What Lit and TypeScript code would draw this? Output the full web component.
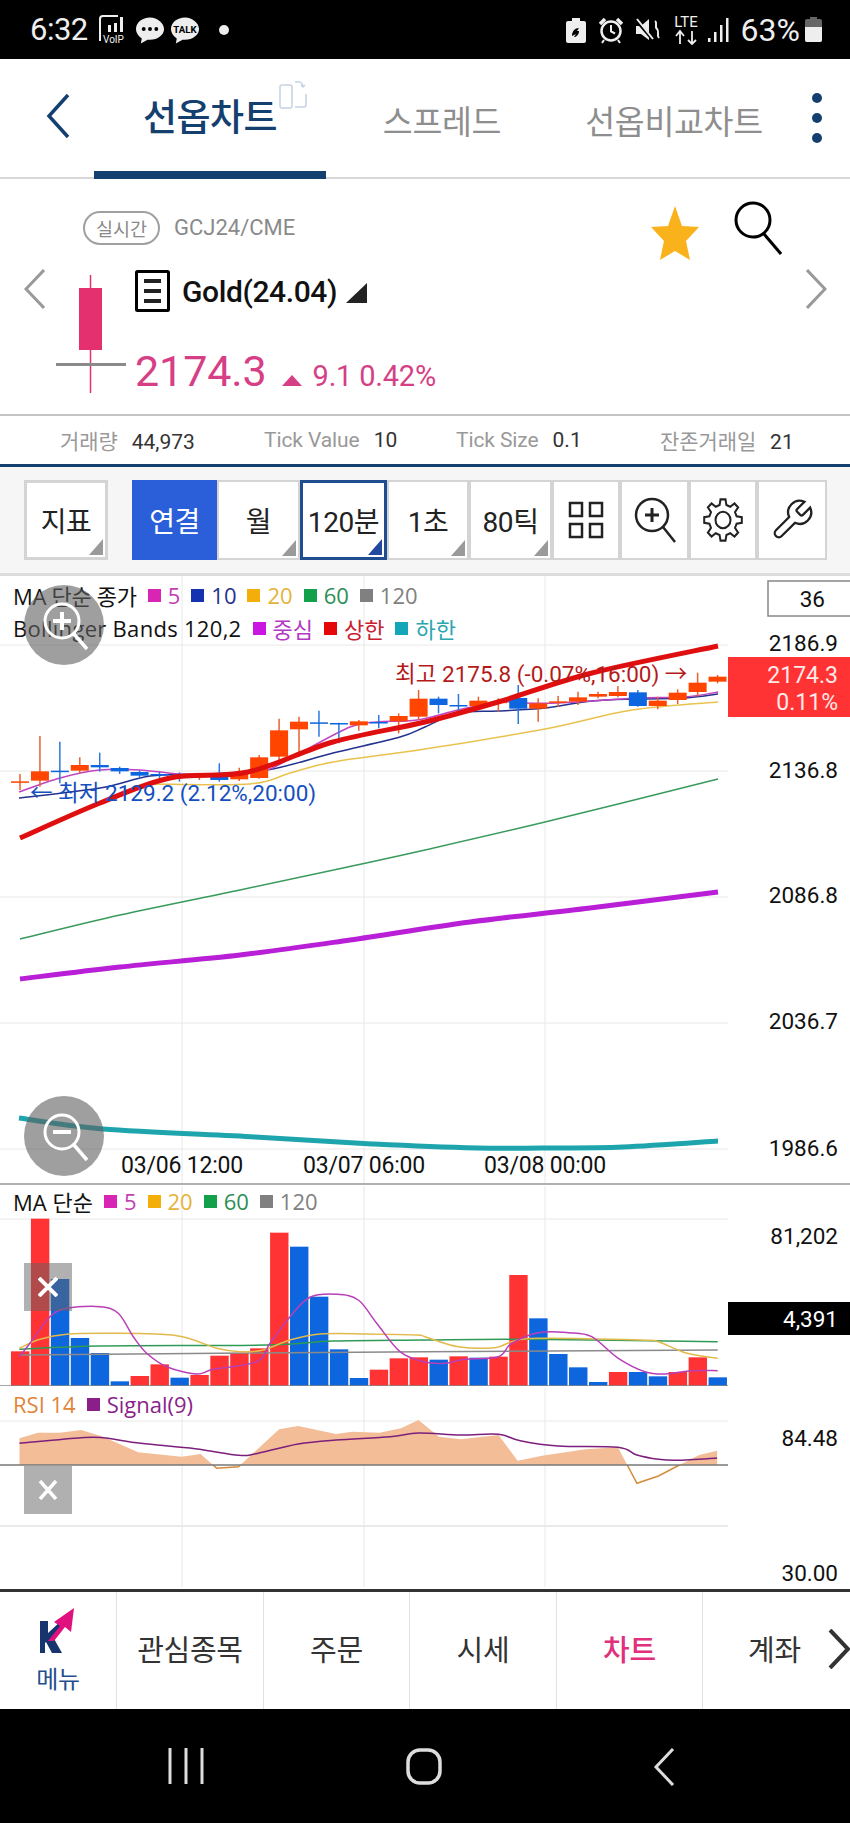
import { LitElement, html, css, svg } from "lit";
import { customElement } from "lit/decorators.js";

type P = [number, number];
const path = (pts: P[]) => pts.map((p, i) => (i ? "L" : "M") + p[0] + " " + p[1]).join(" ");
// smooth curve through points
const smooth = (pts: P[]) => {
  let d = `M${pts[0][0]} ${pts[0][1]}`;
  for (let i = 0; i < pts.length - 1; i++) {
    const p0 = pts[i - 1] || pts[i], p1 = pts[i], p2 = pts[i + 1], p3 = pts[i + 2] || p2;
    const c1: P = [p1[0] + (p2[0] - p0[0]) / 6, p1[1] + (p2[1] - p0[1]) / 6];
    const c2: P = [p2[0] - (p3[0] - p1[0]) / 6, p2[1] - (p3[1] - p1[1]) / 6];
    d += ` C${c1[0].toFixed(1)} ${c1[1].toFixed(1)} ${c2[0].toFixed(1)} ${c2[1].toFixed(1)} ${p2[0]} ${p2[1]}`;
  }
  return d;
};
const cx = (i: number) => 20 + 19.93 * i;
const yA = (v: number) => 570 + v / 3;
const yB = (v: number) => 1180 + v / 3;
const z3 = (list: P[]): P[] => list.map(([x, y]) => [+(x / 3).toFixed(1), +yB(y).toFixed(1)]);
const z6 = (list: P[]): P[] => list.map(([x, y]) => [+(425 + x / 3).toFixed(1), +yB(y).toFixed(1)]);
const z7 = (list: P[]): P[] => list.map(([x, y]) => [+(x / 1.845).toFixed(1), +(1390 + y / 3).toFixed(1)]);

// up?, wickTop, wickBottom, bodyTop, bodyBottom (zoom units)
const candles: [number, number, number, number, number][] = [
  [1,612,660,634,637],[1,498,650,604,632],[0,515,640,602,604],[1,562,610,585,602],[0,548,605,585,592],
  [0,590,612,594,604],[0,602,622,606,617],[0,605,625,612,614],[0,607,635,617,620],[1,610,630,612,622],
  [0,580,635,612,630],[1,593,633,612,628],[1,555,626,562,624],[1,446,575,481,560],[1,440,560,455,478],
  [0,422,500,457,459],[0,458,520,459,461],[1,450,482,454,466],[0,435,475,456,458],[1,430,490,438,454],
  [1,360,450,386,440],[0,380,430,386,405],[0,372,425,405,407],[1,380,420,392,408],[1,385,425,395,397],
  [0,345,462,384,416],[1,385,455,400,416],[1,378,410,394,396],[1,365,405,382,395],[1,365,385,372,380],
  [1,348,382,366,378],[0,360,410,367,408],[1,380,418,392,408],[1,358,402,368,390],[1,308,380,338,366],
  [1,315,340,320,335],
];
const bars: [number, number][] = [
  [1,514],[1,116],[0,297],[0,474],[0,519],[0,604],[1,588],[1,553],[0,593],[1,585],[1,527],[1,519],
  [1,505],[1,158],[0,200],[0,350],[0,508],[0,594],[1,569],[1,535],[1,532],[0,539],[1,529],[0,533],
  [1,530],[1,285],[0,415],[0,522],[0,562],[0,606],[1,576],[0,576],[0,589],[1,576],[1,532],[0,592],
];

const upper: P[] = [[20,838],[100,803],[170,778],[248,772],[333,742],[425,722],[498,702],[592,673],[718,646]];
const middle: P[] = [[20,979],[120,967],[240,955],[350,940],[470,922],[590,908],[718,892]];
const lower: P[] = [[19,1118],[103,1129],[255,1137],[374,1144],[477,1148],[542,1148],[623,1147],[718,1141]];
const green: P[] = [[20,939],[120,915],[240,890],[343,868],[425,850],[545,822],[718,779]];
const yellow: P[] = [[150,784],[250,784],[290,773],[333,762],[425,749],[545,729],[632,710],[718,702]];
const blue: P[] = [[19,798],[100,788],[150,776],[200,774],[267,770],[333,753],[400,737],[425,727],[458,713],[498,711],[545,708],[592,701],[638,699],[685,698],[718,694]];
const magenta: P[] = [[19,792],[60,778],[100,770],[140,770],[180,774],[233,774],[267,770],[300,753],[350,727],[377,722],[417,720],[458,710],[498,702],[525,703],[558,703],[592,701],[638,698],[685,697],[718,692]];

const vMag: P[] = [...z3([[58,530],[90,490],[150,410],[200,385],[300,380],[355,400],[400,470],[440,520],[500,560],[590,582],[640,568],[770,545],[810,490],[870,410],[930,352],[1010,343],[1075,360],[1130,430],[1200,515],[1270,545]]),
  ...z6([[60,550],[120,538],[220,530],[260,490],[340,458],[430,458],[500,470],[580,535],[660,575],[720,582],[800,572],[878,572]])];
const vYel: P[] = [...z3([[58,505],[120,478],[200,463],[330,460],[530,467],[650,505],[720,515],[790,510],[870,480],[960,462],[1100,462],[1250,465]]),
  ...z6([[0,470],[100,500],[210,503],[260,485],[340,475],[640,480],[700,485],[780,518],[878,535]])];
const vGre: P[] = [...z3([[58,508],[300,498],[800,495],[1000,483],[1270,480]]), ...z6([[300,478],[878,485]])];
const vGry: P[] = [...z3([[58,525],[1270,515]]), ...z6([[878,510]])];

const rsi: P[] = z7([[36,145],[70,128],[110,128],[150,120],[190,140],[255,187],[335,200],[370,192],[400,235],[440,230],[515,118],[550,108],[620,132],[650,125],[700,128],[740,115],[772,90],[810,140],[850,148],[920,135],[955,212],[1000,197],[1080,178],[1140,172],[1175,280],[1215,258],[1250,228],[1290,195],[1323,182]]);
const signal: P[] = z7([[36,160],[150,143],[190,143],[260,160],[360,176],[440,196],[470,192],[550,162],[620,150],[720,140],[772,129],[850,135],[920,133],[960,152],[1030,168],[1140,172],[1175,195],[1215,208],[1250,211],[1323,204]]);

const gearPath = (() => {
  const c = 20, n = 8, ro = 19, ri = 14;
  const pts: string[] = [];
  for (let i = 0; i < n; i++) {
    const a = (i / n) * Math.PI * 2 - Math.PI / 2;
    const s = Math.PI / n;
    [[ri, -s * 0.62], [ro, -s * 0.34], [ro, s * 0.34], [ri, s * 0.62]].forEach(([r, o]) => {
      pts.push(`${(c + r * Math.cos(a + o)).toFixed(1)} ${(c + r * Math.sin(a + o)).toFixed(1)}`);
    });
  }
  return "M" + pts.join(" L") + " Z";
})();

const legend1 = [["#d925b4", "5", "#c23fb5"], ["#1433b0", "10", "#23318f"], ["#f4ae0a", "20", "#e6b33a"], ["#12a04a", "60", "#2a8f55"], ["#808080", "120", "#808080"]];
const legend2 = [["#c916e0", "중심", "#b338c4"], ["#e40808", "상한", "#c82030"], ["#13a6b8", "하한", "#2aa6b0"]];
const legend3 = [["#d925b4", "5", "#c23fb5"], ["#f4ae0a", "20", "#e6b33a"], ["#12a04a", "60", "#2a8f55"], ["#808080", "120", "#808080"]];
const legendItems = (items: string[][]) => items.map(([sq, t, c]) => html`<span class="sq" style="background:${sq}"></span><span class="lt" style="color:${c}">${t}</span>`);

@customElement("app-root")
export class AppRoot extends LitElement {
  static styles = css`
    :host { display: block; width: 850px; height: 1823px; overflow: hidden; background: #fff;
      font-family: Roboto, "Noto Sans CJK KR", sans-serif; color: #111; }
    * { box-sizing: border-box; }
    svg { display: block; }
    .page { display: flex; flex-direction: column; height: 1823px; }

    .status { height: 59px; background: #000; color: #eee; display: flex; align-items: center; padding: 0 28px 0 30px; flex: none; }
    .time { font-size: 31px; width: 68px; letter-spacing: -.5px; }
    .sl { display: flex; align-items: center; gap: 5px; }
    .sr { margin-left: auto; display: flex; align-items: center; }
    .pct { font-size: 32px; margin: 0 5px 0 11px; letter-spacing: 0; }

    .tabs { height: 120px; flex: none; display: grid; grid-template-columns: 94px 232px 232px 232px 60px; border-bottom: 2px solid #d8d8d8; }
    .back { display: flex; align-items: center; padding: 0 0 4px 46px; }
    .tab { position: relative; display: flex; align-items: center; justify-content: center; font-size: 32.5px; color: #8e8e8e; margin-bottom: -2px; white-space: nowrap; letter-spacing: -.3px; }
    .tab.on { color: #14406f; font-weight: 500; font-size: 37px; border-bottom: 8px solid #14406f; letter-spacing: -.5px; }
    .rot { position: absolute; left: 185px; top: 21px; }
    .dots { display: flex; flex-direction: column; align-items: center; justify-content: center; gap: 10px; padding-right: 6px; }
    .dots i { width: 10px; height: 10px; border-radius: 50%; background: #14406f; }

    .info { height: 237px; flex: none; border-bottom: 2px solid #c4c4c4; display: flex; flex-direction: column; }
    .r1 { height: 76px; flex: none; display: flex; padding: 22px 68px 0 83px; align-items: flex-start; }
    .pill { height: 34px; width: 77px; margin-top: 10px; border: 2px solid #a0a0a0; border-radius: 17px; font-size: 18.5px; color: #8a8a8a; display: flex; align-items: center; justify-content: center; }
    .code { margin: 14px 0 0 14px; font-size: 22px; color: #8a8a8a; }
    .star { margin: 5px 35px 0 auto; }
    .r2 { flex: 1; display: flex; padding: 0 23px 0 24px; }
    .chev { margin-top: 14px; flex: none; }
    .candle { margin: 18px 0 0 11px; flex: none; }
    .col { margin-left: 9px; flex: 1; }
    .name { display: flex; align-items: center; margin-top: 15px; height: 42px; }
    .gold { font-size: 30px; font-weight: 500; margin-left: 12px; letter-spacing: -.4px; }
    .tri { margin-left: 9px; margin-top: 4px; }
    .price { display: flex; align-items: baseline; color: #d63f86; margin-top: 33px; }
    .p1 { font-size: 43px; line-height: 52px; letter-spacing: -.1px; }
    .up { width: 0; height: 0; border-left: 10px solid transparent; border-right: 10px solid transparent; border-bottom: 11px solid #d63f86; margin: 0 11px 0 15px; }
    .p2 { font-size: 29px; letter-spacing: -.2px; }

    .stats { height: 51px; flex: none; border-bottom: 3px solid #14406f; display: grid; grid-template-columns: 204px 192px 204px 1fr; padding-left: 60px; align-items: center; font-size: 21px; }
    .stat { display: flex; gap: 14px; white-space: nowrap; align-items: baseline; }
    .stat b { font-weight: 400; color: #999; letter-spacing: -.1px; }
    .stat span { color: #333; }

    .bar { height: 109px; flex: none; background: #f6f6f6; border-bottom: 3px solid #dcdcdc; padding: 13px 0 0 24px; display: grid; grid-template-columns: 108px 85px 83px 87px 82px 83px 68px 69px 68px 70px; align-items: start; }
    .btn { position: relative; height: 80px; background: #fff; border: 2px solid #d4d4d4; display: flex; align-items: center; justify-content: center; font-size: 28px; color: #222; white-space: nowrap; letter-spacing: -.4px; }
    .btn.first { width: 84px; border-width: 3px; }
    .btn.blue { background: #2b5fd9; border-color: #2b5fd9; color: #fff; }
    .btn.sel { border: 3px solid #1f4d8f; z-index: 1; }
    .btn.corner::after { content: ""; position: absolute; right: 2px; bottom: 2px; border-style: solid; border-width: 0 0 16px 14px; border-color: transparent transparent #9a9a9a transparent; }
    .btn.sel.corner::after { border-bottom-color: #2249a0; }

    .pane { position: relative; flex: none; overflow: hidden; }
    .pane svg.g { position: absolute; left: 0; top: 0; }
    .p-main { height: 607px; }
    .p-vol { height: 203px; border-top: 2px solid #b0b0b0; }
    .p-rsi { height: 203px; }
    .lg { position: absolute; left: 13px; display: flex; align-items: center; font-family: "Open Sans", "Noto Sans CJK KR", sans-serif; font-size: 22px; white-space: nowrap; color: #111; height: 30px; }
    .sq { width: 13px; height: 13px; margin: 0 7px 0 11px; flex: none; }
    .l1 { top: 4px; } .l2 { top: 37px; }
    .l1 > span:first-child { letter-spacing: -.3px; }
    .l2 > span:first-child { letter-spacing: .3px; }
    .lv { top: 1px; } .lr { top: 3px; }
    .rsi-n { color: #e0853a; } .rsi-s { color: #8a1f8a; }
    .rsq { width: 13px; height: 13px; background: #8a1f8a; margin: 0 7px 0 11px; }
    .zoomc { position: absolute; left: 24px; width: 80px; height: 80px; border-radius: 50%; background: rgba(95,95,95,.6); }
    .zoomc.a { top: 9px; } .zoomc.b { top: 520px; }
    .xb { position: absolute; left: 24px; width: 48px; height: 48px; background: rgba(100,100,100,.5); display: flex; align-items: center; justify-content: center; }
    .xb.a { top: 78px; } .xb.b { top: 80px; background: #b0b0b0; }

    text { font-family: Roboto, "Noto Sans CJK KR", sans-serif; }
    .ax { font-size: 22.5px; fill: #111; text-anchor: end; }
    .axw { font-size: 23px; fill: #ffe9e9; text-anchor: end; }
    .axk { font-size: 22.5px; fill: #fff; text-anchor: end; }
    .tm { font-size: 23px; fill: #111; text-anchor: middle; letter-spacing: -.2px; }
    .hi { font-size: 22.5px; fill: #b51a1a; }
    .lo { font-size: 22.5px; fill: #1450c0; }

    .nav { height: 120px; flex: none; border-top: 3px solid #333; display: grid; grid-template-columns: 117px 147px 146px 147px 146px 147px; position: relative; background: #fff; }
    .ni { border-right: 1px solid #e2e2e2; display: flex; align-items: center; justify-content: center; font-size: 29px; color: #333; padding-bottom: 6px; letter-spacing: -.3px; }
    .ni:nth-child(6) { border-right: 0; padding-right: 4px; }
    .ni.on { color: #e0307e; font-weight: 500; }
    .menu { flex-direction: column; padding: 0; justify-content: flex-start; }
    .menu span { font-size: 24px; color: #1f4f8f; margin-top: 11px; line-height: 30px; }
    .menu svg { margin: 12px 12px 0 0; }
    .more { position: absolute; right: 0; top: 37px; }

    .sys { flex: 1; background: #000; display: flex; align-items: flex-start; padding-top: 39px; }
    .sys div { display: flex; justify-content: center; }
    .s1 { margin-left: 168px; width: 36px; } .s2 { margin-left: 202px; width: 36px; } .s3 { margin-left: 211px; width: 22px; }
  `;

  private mainChart() {
    return svg`
      <g stroke="#e8e8e8" stroke-width="1" fill="none">
        ${[645, 771, 897, 1023, 1149].map((y) => svg`<line x1="0" x2="728" y1=${y} y2=${y}/>`)}
        ${[182, 364, 545].map((x) => svg`<line x1=${x} x2=${x} y1="576" y2="1184"/>`)}
      </g>
      <path d=${smooth(lower)} stroke="#1ea4ad" stroke-width="5" fill="none"/>
      <path d=${smooth(middle)} stroke="#b81fd6" stroke-width="5" fill="none"/>
      <path d=${smooth(green)} stroke="#3a9a5c" stroke-width="1.5" fill="none"/>
      <path d=${smooth(yellow)} stroke="#e9c24e" stroke-width="1.5" fill="none"/>
      <path d=${smooth(blue)} stroke="#23318f" stroke-width="1.5" fill="none"/>
      <path d=${smooth(magenta)} stroke="#c044c0" stroke-width="1.5" fill="none"/>
      ${candles.map(([up, a, b, c, d], i) => {
        const col = up ? "#ff4500" : "#0b66e0";
        const x = cx(i);
        return svg`<line x1=${x} x2=${x} y1=${yA(a)} y2=${yA(b)} stroke=${up ? "#e8622e" : "#2a78dc"} stroke-width="1.5"/>
          <rect x=${x - 9} y=${yA(c)} width="18" height=${Math.max((d - c) / 3, 1.5)} fill=${col}/>`;
      })}
      <path d=${smooth(upper)} stroke="#e00f0f" stroke-width="5" fill="none"/>
      <text class="lo" x="30" y="801">← 최저 2129.2 (2.12%,20:00)</text>
      <text class="hi" x="395" y="682">최고 2175.8 (-0.07%,16:00) →</text>
      <rect x="768" y="581" width="83" height="35" fill="#fff" stroke="#888" stroke-width="1.5"/>
      <text class="ax" x="825" y="607">36</text>
      <text class="ax" x="838" y="651">2186.9</text>
      <rect x="728" y="657" width="122" height="60" fill="#ff3333"/>
      <text class="axw" x="838" y="683">2174.3</text>
      <text class="axw" x="838" y="710">0.11%</text>
      <text class="ax" x="838" y="778">2136.8</text>
      <text class="ax" x="838" y="903">2086.8</text>
      <text class="ax" x="838" y="1029">2036.7</text>
      <text class="ax" x="838" y="1156">1986.6</text>
      ${[["03/06 12:00", 182], ["03/07 06:00", 364], ["03/08 00:00", 545]].map(([t, x]) => svg`<text class="tm" x=${x} y="1173">${t}</text>`)}
    `;
  }

  private volChart() {
    return svg`
      <g stroke="#e8e8e8" stroke-width="1" fill="none">
        <line x1="0" x2="728" y1="1219" y2="1219"/>
        ${[182, 364, 545].map((x) => svg`<line x1=${x} x2=${x} y1="1186" y2="1388"/>`)}
      </g>
      ${bars.map(([up, t], i) => svg`<rect x=${cx(i) - 9} y=${yB(t)} width="18.4" height=${(619 - t) / 3} fill=${up ? "#ff3333" : "#0d66dd"}/>`)}
      <line x1="0" x2="728" y1="1386" y2="1386" stroke="#888" stroke-width="1.5"/>
      <path d=${smooth(vGry)} stroke="#8a8a8a" stroke-width="1.5" fill="none"/>
      <path d=${smooth(vGre)} stroke="#2f9a55" stroke-width="1.5" fill="none"/>
      <path d=${smooth(vYel)} stroke="#e2b94b" stroke-width="1.5" fill="none"/>
      <path d=${smooth(vMag)} stroke="#b83fb8" stroke-width="1.5" fill="none"/>
      <text class="ax" x="838" y="1244">81,202</text>
      <rect x="728" y="1302" width="122" height="33" fill="#000"/>
      <text class="axk" x="838" y="1327">4,391</text>
    `;
  }

  private rsiChart() {
    const first = rsi[0], last = rsi[rsi.length - 1];
    return svg`
      <defs>
        <clipPath id="above"><rect x="0" y="1386" width="850" height="79"/></clipPath>
        <clipPath id="below"><rect x="0" y="1465" width="850" height="60"/></clipPath>
      </defs>
      <g stroke="#e8e8e8" stroke-width="1" fill="none">
        <line x1="0" x2="728" y1="1421" y2="1421"/>
        <line x1="0" x2="728" y1="1526" y2="1526" stroke="#d4d4d4"/>
        ${[182, 364, 545].map((x) => svg`<line x1=${x} x2=${x} y1="1388" y2="1587"/>`)}
      </g>
      <path d=${path(rsi) + ` L${last[0]} 1465 L${first[0]} 1465 Z`} fill="#f3bd98" clip-path="url(#above)"/>
      <path d=${path(rsi)} fill="none" stroke="#d68a3c" stroke-width="1.5" clip-path="url(#below)"/>
      <line x1="0" x2="728" y1="1465" y2="1465" stroke="#777" stroke-width="1.5"/>
      <path d=${smooth(signal)} stroke="#7c1f7c" stroke-width="1.5" fill="none"/>
      <text class="ax" x="838" y="1446">84.48</text>
      <text class="ax" x="838" y="1581">30.00</text>
    `;
  }

  render() {
    return html`<div class="page">
      <div class="status">
        <span class="time">6:32</span>
        <div class="sl">
          <svg width="32" height="34" viewBox="0 0 32 34" fill="none"><path d="M2 28V6a3 3 0 0 1 3-3h15" stroke="#eee" stroke-width="2"/><path d="M10 19h3v-7h-3zM16 19h3V10h-3zM22 19h3V4h-3z" fill="#eee"/><text x="5" y="30" font-size="10" fill="#eee">VoIP</text></svg>
          <svg width="30" height="32" viewBox="0 0 31 32"><path d="M15.5 3C7.5 3 1 8.2 1 15c0 4 2.4 7.5 6 9.700L6 30l7-4c.8.100 1.700.200 2.500.200 8 0 14.500-5.200 14.500-11.200S23.500 3 15.500 3z" fill="#eee"/><circle cx="9" cy="15" r="2" fill="#000"/><circle cx="15.500" cy="15" r="2" fill="#000"/><circle cx="22" cy="15" r="2" fill="#000"/></svg>
          <svg width="30" height="32" viewBox="0 0 31 32"><path d="M15.500 3C7.500 3 1 8.200 1 15c0 4 2.400 7.500 6 9.700L6 30l7-4c.8.100 1.700.200 2.500.200 8 0 14.500-5.200 14.500-11.200S23.500 3 15.500 3z" fill="#eee"/><text x="15.500" y="19" font-size="10" font-weight="700" text-anchor="middle" fill="#000">TALK</text></svg>
          <svg width="10" height="10" viewBox="0 0 10 10" style="margin-left:14px"><circle cx="5" cy="5" r="5" fill="#eee"/></svg>
        </div>
        <div class="sr">
          <svg width="20" height="26" viewBox="0 0 20 26" style="margin-right:13px"><path d="M6 1h8v3h4a2 2 0 0 1 2 2v18a2 2 0 0 1-2 2H2a2 2 0 0 1-2-2V6a2 2 0 0 1 2-2h4z" fill="#eee"/><path d="M6 19c0-5 3-8 7-8l-2 3h2c0 4-3 6-5 6l2-3z" fill="#000"/></svg>
          <svg width="24" height="28" viewBox="0 0 24 28" style="margin-right:12px" fill="none" stroke="#eee"><circle cx="12" cy="15" r="9.500" stroke-width="2.500"/><path d="M12 9v6.500l4 2" stroke-width="2"/><path d="M1 8l5-5M23 8l-5-5" stroke-width="3.500"/><path d="M5 24l-2 3M19 24l2 3" stroke-width="2"/></svg>
          <svg width="26" height="26" viewBox="0 0 26 26" style="margin-right:11px" fill="none"><path d="M1 9h5l8 -7v21l-8-6H1z" fill="#eee"/><path d="M1 3l17 20" stroke="#000" stroke-width="3"/><path d="M2 2l16 20" stroke="#eee" stroke-width="2"/><path d="M20 4c3 2-1 5 2 8s-1 5 2 9" stroke="#eee" stroke-width="2"/></svg>
          <svg width="28" height="32" viewBox="0 0 28 32" style="margin-right:8px"><text x="14" y="13" font-size="15" text-anchor="middle" fill="#eee">LTE</text><path d="M8 30V18M4 22l4-5 4 5M20 17v13M16 26l4 4 4-4" stroke="#eee" stroke-width="1.800" fill="none"/></svg>
          <svg width="22" height="24" viewBox="0 0 22 24" fill="#eee"><rect x="0" y="20" width="2.500" height="4"/><rect x="6" y="14" width="2.500" height="10"/><rect x="12" y="7" width="2.500" height="17"/><rect x="18" y="0" width="2.500" height="24"/></svg>
          <span class="pct">63%</span>
          <svg width="17" height="25" viewBox="0 0 17 25"><path d="M5 0h7v2h3a2 2 0 0 1 2 2v19a2 2 0 0 1-2 2H2a2 2 0 0 1-2-2V4a2 2 0 0 1 2-2h3z" fill="#666"/><path d="M0 10h17v13a2 2 0 0 1-2 2H2a2 2 0 0 1-2-2z" fill="#eee"/></svg>
        </div>
      </div>

      <div class="tabs">
        <div class="back"><svg width="24" height="46" viewBox="0 0 24 46" fill="none"><path d="M22 2L3 23l19 21" stroke="#14406f" stroke-width="3.500"/></svg></div>
        <div class="tab on">선옵차트
          <svg class="rot" width="30" height="30" viewBox="0 0 30 30" fill="none" stroke="#c5d2e4" stroke-width="1.500"><rect x="1" y="5" width="12" height="23" rx="2"/><path d="M16 2c4-1 7 0 8 4M26 5l-2 2-2-2M27 14v11a2 2 0 0 1-2 2h-9"/></svg>
        </div>
        <div class="tab">스프레드</div>
        <div class="tab">선옵비교차트</div>
        <div class="dots"><i></i><i></i><i></i></div>
      </div>

      <div class="info">
        <div class="r1">
          <span class="pill">실시간</span><span class="code">GCJ24/CME</span>
          <svg class="star" width="48" height="54" viewBox="0 0 48 54"><path d="M24 0l7 20 17 1-13 14 4 19-15-9-15 9 4-19L0 21l17-1z" fill="#f9b21c"/></svg>
          <svg width="48" height="54" viewBox="0 0 48 54" fill="none" stroke="#000"><ellipse cx="19" cy="19" rx="17" ry="17" stroke-width="3"/><path d="M30 33l17 20" stroke-width="3"/></svg>
        </div>
        <div class="r2">
          <svg class="chev" width="21" height="40" viewBox="0 0 21 40" fill="none"><path d="M20 1L2 20l18 19" stroke="#999" stroke-width="3"/></svg>
          <svg class="candle" width="70" height="122" viewBox="0 0 70 122"><path d="M34.500 2v118" stroke="#e4306f" stroke-width="1.500"/><rect x="23" y="15" width="23" height="62" fill="#e4306f"/><rect x="0" y="90" width="70" height="3" fill="#8a8a8a"/></svg>
          <div class="col">
            <div class="name">
              <svg width="35" height="42" viewBox="0 0 35 42" fill="none"><rect x="1.500" y="1.500" width="32" height="39" stroke="#000" stroke-width="3" rx="1"/><path d="M9 11h17M9 21h17M9 31h17" stroke="#222" stroke-width="4"/></svg>
              <span class="gold">Gold(24.04)</span>
              <svg class="tri" width="21" height="20" viewBox="0 0 21 20"><path d="M21 0v20H0z" fill="#222"/></svg>
            </div>
            <div class="price"><span class="p1">2174.3</span><span class="up"></span><span class="p2">9.1 0.42%</span></div>
          </div>
          <svg class="chev" width="21" height="40" viewBox="0 0 21 40" fill="none"><path d="M1 1l18 19L1 39" stroke="#999" stroke-width="3"/></svg>
        </div>
      </div>

      <div class="stats">
        <div class="stat"><b>거래량</b><span>44,973</span></div>
        <div class="stat"><b>Tick Value</b><span>10</span></div>
        <div class="stat"><b>Tick Size</b><span>0.1</span></div>
        <div class="stat"><b>잔존거래일</b><span>21</span></div>
      </div>

      <div class="bar">
        <div class="btn first corner">지표</div>
        <div class="btn blue">연결</div>
        <div class="btn corner">월</div>
        <div class="btn sel corner">120분</div>
        <div class="btn corner">1초</div>
        <div class="btn corner">80틱</div>
        <div class="btn"><svg width="36" height="38" viewBox="0 0 36 38" fill="none" stroke="#222" stroke-width="2.500"><rect x="2" y="2" width="12" height="13"/><rect x="22" y="2" width="12" height="13"/><rect x="2" y="23" width="12" height="13"/><rect x="22" y="23" width="12" height="13"/></svg></div>
        <div class="btn"><svg width="42" height="46" viewBox="0 0 42 46" fill="none" stroke="#222" stroke-width="2.500"><circle cx="18" cy="18" r="16"/><path d="M18 11v14M11 18h14" stroke-width="3"/><path d="M29 30l12 15"/></svg></div>
        <div class="btn"><svg width="40" height="44" viewBox="0 0 40 40" preserveAspectRatio="none" fill="none" stroke="#222" stroke-width="2"><path d=${gearPath}/><circle cx="20" cy="20" r="7.500"/></svg></div>
        <div class="btn"><svg width="46" height="48" viewBox="0 0 24 24" fill="none" stroke="#222" stroke-width="1.200"><path d="M14.700 6.300a1 1 0 0 0 0 1.400l1.600 1.600a1 1 0 0 0 1.400 0l3.770-3.770a6 6 0 0 1-7.940 7.940l-6.910 6.910a2.120 2.120 0 0 1-3-3l6.910-6.910a6 6 0 0 1 7.940-7.940l-3.760 3.760z"/></svg></div>
      </div>

      <div class="pane p-main">
        <svg class="g" width="850" height="607" viewBox="0 576 850 607">${this.mainChart()}</svg>
        <div class="lg l1"><span>MA 단순 종가</span>${legendItems(legend1)}</div>
        <div class="lg l2"><span>Bollinger Bands 120,2</span>${legendItems(legend2)}</div>
        <div class="zoomc a"><svg width="80" height="80" viewBox="0 0 80 80" fill="none" stroke="#fff" stroke-width="3"><circle cx="38" cy="36" r="17"/><path d="M38 27v18M29 36h18" stroke-width="4"/><path d="M50 49l13 15" stroke-width="3.500"/></svg></div>
        <div class="zoomc b"><svg width="80" height="80" viewBox="0 0 80 80" fill="none" stroke="#fff" stroke-width="3"><circle cx="38" cy="36" r="17"/><path d="M29 36h18" stroke-width="4"/><path d="M50 49l13 15" stroke-width="3.500"/></svg></div>
      </div>

      <div class="pane p-vol">
        <svg class="g" width="850" height="201" viewBox="0 1185 850 201">${this.volChart()}</svg>
        <div class="lg lv"><span>MA 단순</span>${legendItems(legend3)}</div>
        <div class="xb a"><svg width="20" height="20" viewBox="0 0 20 20" stroke="#fff" stroke-width="4"><path d="M1 1l18 18M19 1L1 19"/></svg></div>
      </div>

      <div class="pane p-rsi">
        <svg class="g" width="850" height="203" viewBox="0 1386 850 203">${this.rsiChart()}</svg>
        <div class="lg lr"><span class="rsi-n">RSI 14</span><span class="rsq"></span><span class="rsi-s">Signal(9)</span></div>
        <div class="xb b"><svg width="20" height="20" viewBox="0 0 20 20" stroke="#fff" stroke-width="3.500"><path d="M2 1l16 18M18 1L2 19"/></svg></div>
      </div>

      <div class="nav">
        <div class="ni menu">
          <svg width="44" height="50" viewBox="0 0 44 50"><path d="M10 17h8v12l13-12h0v8l-8 8 9 16H22l-6-11-1 1v10h-5z" fill="#16356e"/><path d="M18 37L30 22l-6-4 20-14-3 24-6-5-11 14z" fill="#e0107e"/></svg>
          <span>메뉴</span>
        </div>
        <div class="ni">관심종목</div>
        <div class="ni">주문</div>
        <div class="ni">시세</div>
        <div class="ni on">차트</div>
        <div class="ni">계좌</div>
        <svg class="more" width="22" height="40" viewBox="0 0 22 40" fill="none"><path d="M2 1l18 19L2 39" stroke="#333" stroke-width="4"/></svg>
      </div>

      <div class="sys">
        <div class="s1"><svg width="36" height="36" viewBox="0 0 36 36" stroke="#ddd" stroke-width="3"><path d="M2 0v36M18 0v36M34 0v36"/></svg></div>
        <div class="s2"><svg width="36" height="37" viewBox="0 0 36 37" fill="none" stroke="#ddd" stroke-width="3.500"><rect x="2" y="2" width="32" height="33" rx="12"/></svg></div>
        <div class="s3"><svg width="22" height="38" viewBox="0 0 22 38" fill="none" stroke="#ddd" stroke-width="3"><path d="M20 1L3 19l17 18"/></svg></div>
      </div>
    </div>`;
  }
}
